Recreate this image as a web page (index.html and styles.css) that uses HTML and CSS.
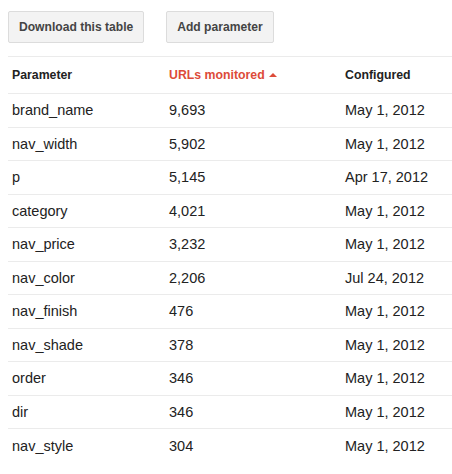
FILE: index.html
```html
<!DOCTYPE html>
<html>
<head>
<meta charset="utf-8">
<link rel="stylesheet" href="styles.css">
</head>
<body>
<div class="page">
  <div class="toolbar">
    <button class="btn">Download this table</button>
    <button class="btn">Add parameter</button>
  </div>
  <div class="table">
    <div class="row head">
      <div class="cell">Parameter</div>
      <div class="cell sorted">URLs monitored <span class="arrow"></span></div>
      <div class="cell">Configured</div>
    </div>
    <div class="row"><div class="cell">brand_name</div><div class="cell">9,693</div><div class="cell">May 1, 2012</div></div>
    <div class="row"><div class="cell">nav_width</div><div class="cell">5,902</div><div class="cell">May 1, 2012</div></div>
    <div class="row"><div class="cell">p</div><div class="cell">5,145</div><div class="cell">Apr 17, 2012</div></div>
    <div class="row"><div class="cell">category</div><div class="cell">4,021</div><div class="cell">May 1, 2012</div></div>
    <div class="row"><div class="cell">nav_price</div><div class="cell">3,232</div><div class="cell">May 1, 2012</div></div>
    <div class="row"><div class="cell">nav_color</div><div class="cell">2,206</div><div class="cell">Jul 24, 2012</div></div>
    <div class="row"><div class="cell">nav_finish</div><div class="cell">476</div><div class="cell">May 1, 2012</div></div>
    <div class="row"><div class="cell">nav_shade</div><div class="cell">378</div><div class="cell">May 1, 2012</div></div>
    <div class="row"><div class="cell">order</div><div class="cell">346</div><div class="cell">May 1, 2012</div></div>
    <div class="row"><div class="cell">dir</div><div class="cell">346</div><div class="cell">May 1, 2012</div></div>
    <div class="row last"><div class="cell">nav_style</div><div class="cell">304</div><div class="cell">May 1, 2012</div></div>
  </div>
</div>
</body>
</html>
```
FILE: styles.css
```css
html, body {
  margin: 0;
  padding: 0;
  background: #fff;
}
body {
  font-family: "Liberation Sans", Arial, sans-serif;
  color: #222;
  overflow: hidden;
}
.page {
  padding: 11px 0 0 8px;
}
.toolbar {
  display: flex;
  gap: 22px;
  height: 32px;
}
.btn {
  height: 32px;
  padding: 0 10px;
  border: 1px solid #dcdcdc;
  border-radius: 2px;
  background: #f3f3f3;
  color: #444;
  font-family: "Liberation Sans", Arial, sans-serif;
  font-weight: bold;
  font-size: 12.1px;
  cursor: default;
}
.table {
  margin-top: 13px;
  border-top: 1px solid #ebebeb;
}
.row {
  display: grid;
  grid-template-columns: 157px 176px 1fr;
  align-items: center;
  height: 33.5px;
  border-bottom: 1px solid #ebebeb;
  box-sizing: border-box;
  font-size: 14.5px;
}
.row.last {
  border-bottom: none;
}
.row.head {
  height: 37px;
  font-weight: bold;
  font-size: 12.3px;
}
.cell {
  padding-left: 4px;
  white-space: nowrap;
}
.sorted {
  color: #dd4b39;
}
.arrow {
  display: inline-block;
  width: 0;
  height: 0;
  border-left: 4px solid transparent;
  border-right: 4px solid transparent;
  border-bottom: 4px solid #dd4b39;
  vertical-align: 2px;
  margin-left: 1px;
}
```
